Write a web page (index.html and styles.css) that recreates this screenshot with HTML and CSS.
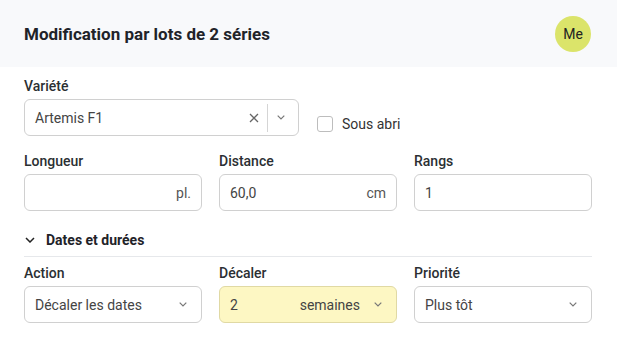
FILE: index.html
```html
<!DOCTYPE html>
<html lang="fr">
<head>
<meta charset="utf-8">
<title>Modification par lots</title>
<link rel="stylesheet" href="styles.css">
</head>
<body>
<div class="modal">
  <header class="head">
    <h1 class="title">Modification par lots de 2 séries</h1>
    <div class="avatar">Me</div>
  </header>
  <div class="content">
    <div class="row1">
      <div class="field variety">
        <label class="lbl">Variété</label>
        <div class="ctrl select">
          <span class="val">Artemis F1</span>
          <span class="tools">
            <svg class="clear" width="10" height="10" viewBox="0 0 10 10"><path d="M1 1L9 9M9 1L1 9" stroke="#666" stroke-width="1.3" fill="none"/></svg>
            <span class="sep"></span>
            <svg class="chev" width="8" height="5" viewBox="0 0 8 5"><path d="M0.7 0.7L4 4L7.3 0.7" stroke="#777" stroke-width="1.2" fill="none"/></svg>
          </span>
        </div>
      </div>
      <label class="check"><span class="box"></span>Sous abri</label>
    </div>

    <div class="grid3 row2">
      <div class="field">
        <label class="lbl">Longueur</label>
        <div class="ctrl"><span class="val"></span><span class="unit">pl.</span></div>
      </div>
      <div class="field">
        <label class="lbl">Distance</label>
        <div class="ctrl"><span class="val">60,0</span><span class="unit">cm</span></div>
      </div>
      <div class="field">
        <label class="lbl">Rangs</label>
        <div class="ctrl"><span class="val">1</span></div>
      </div>
    </div>

    <div class="section">
      <svg class="sec-chev" width="10" height="6" viewBox="0 0 10 6"><path d="M1 1L5 5L9 1" stroke="#222" stroke-width="1.5" fill="none"/></svg>
      <span>Dates et durées</span>
    </div>

    <div class="grid3 row3">
      <div class="field">
        <label class="lbl">Action</label>
        <div class="ctrl sel">
          <span class="val">Décaler les dates</span>
          <svg class="chev" width="8" height="5" viewBox="0 0 8 5"><path d="M0.7 0.7L4 4L7.3 0.7" stroke="#777" stroke-width="1.2" fill="none"/></svg>
        </div>
      </div>
      <div class="field">
        <label class="lbl">Décaler</label>
        <div class="ctrl sel hl">
          <span class="val">2</span>
          <span class="unit-sel">semaines
            <svg class="chev" width="8" height="5" viewBox="0 0 8 5"><path d="M0.7 0.7L4 4L7.3 0.7" stroke="#777" stroke-width="1.2" fill="none"/></svg>
          </span>
        </div>
      </div>
      <div class="field">
        <label class="lbl">Priorité</label>
        <div class="ctrl sel">
          <span class="val">Plus tôt</span>
          <svg class="chev" width="8" height="5" viewBox="0 0 8 5"><path d="M0.7 0.7L4 4L7.3 0.7" stroke="#777" stroke-width="1.2" fill="none"/></svg>
        </div>
      </div>
    </div>
  </div>
</div>
</body>
</html>
```

FILE: styles.css
```css
* { box-sizing: border-box; }
html, body { margin: 0; padding: 0; background: #ffffff; }
body {
  font-family: Roboto, "Liberation Sans", Arial, sans-serif;
  font-size: 14px;
  color: #333;
  width: 617px;
  height: 341px;
  overflow: hidden;
}
.modal { width: 617px; }
.head {
  height: 67px;
  background: #f8f9fb;
  display: flex;
  align-items: center;
  justify-content: space-between;
  padding: 0 26px 0 24px;
}
.title {
  margin: 0;
  font-size: 17px;
  font-weight: 700;
  color: #1f2329;
  line-height: 20px;
}
.avatar {
  width: 36px;
  height: 36px;
  border-radius: 50%;
  background: #dbe46a;
  color: #222;
  font-size: 14px;
  display: flex;
  align-items: center;
  justify-content: center;
}
.content { padding: 9px 25px 0 24px; }
.lbl {
  display: block;
  font-size: 14px;
  line-height: 20px;
  font-weight: 500;
  color: #2b2f33;
  margin-bottom: 3px;
}
.row1 { display: flex; align-items: flex-end; }
.variety { width: 275px; }
.ctrl {
  height: 37px;
  border: 1px solid #d0d0d0;
  border-radius: 6px;
  background: #fff;
  display: flex;
  align-items: center;
  justify-content: space-between;
  padding: 0 10px;
  color: #444;
  font-size: 14px;
}
.select { padding-right: 13px; }
.tools { display: flex; align-items: center; }
.clear { margin-right: 8px; }
.sep { width: 1px; height: 28px; background: #d5d5d5; margin-right: 9px; }
.check {
  display: flex;
  align-items: center;
  margin-left: 18px;
  margin-bottom: 2px;
  line-height: 20px;
  color: #333;
  font-size: 14px;
}
.box {
  width: 16px;
  height: 16px;
  border: 1px solid #bdbdbd;
  border-radius: 3px;
  margin-right: 9px;
  background: #fff;
}
.grid3 {
  display: grid;
  grid-template-columns: repeat(3, 1fr);
  column-gap: 17px;
}
.row2 { margin-top: 15px; }
.unit { color: #555; }
.section {
  margin-top: 19px;
  display: flex;
  align-items: center;
  line-height: 20px;
  padding-bottom: 6px;
  border-bottom: 1px solid #e6e8eb;
  font-weight: 700;
  color: #1f2329;
}
.sec-chev { margin: 0 11px 0 1px; }
.row3 { margin-top: 6px; }
.sel { padding-right: 14px; }
.hl { background: #fdf7c3; border-color: #e0d9a4; }
.unit-sel { display: flex; align-items: center; color: #444; }
.unit-sel .chev { margin-left: 14px; }
```
